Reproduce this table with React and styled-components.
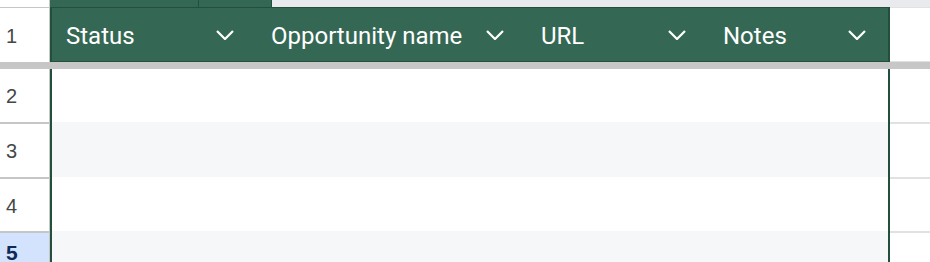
import React from 'react';
import styled, { createGlobalStyle } from 'styled-components';

const Global = createGlobalStyle`
  html, body { margin: 0; padding: 0; background: #ffffff; }
  body { font-family: Roboto, "Liberation Sans", Arial, sans-serif; }
`;

const GREEN = '#356854';
const DARK = '#23503c';
const GRID = '#c4c7c5';
const LIGHT = '#e1e1e1';

const Sheet = styled.div`
  width: 930px;
  height: 262px;
  overflow: hidden;
  display: flex;
  flex-direction: column;
  background: #fff;
`;

const Row = styled.div`
  display: flex;
  flex-shrink: 0;
  height: ${p => p.$h}px;
`;

const Corner = styled.div`
  width: 50px;
  flex-shrink: 0;
  box-sizing: border-box;
  background: #fff;
  border-right: 1px solid ${GRID};
`;

const LetterCell = styled.div`
  width: ${p => p.$w}px;
  flex-shrink: 0;
  box-sizing: border-box;
  background: ${GREEN};
  border-right: 1px solid ${DARK};
`;

const LetterRest = styled.div`
  flex: 1;
  background: #e8eaed;
`;

const RowHead = styled.div`
  width: 50px;
  flex-shrink: 0;
  box-sizing: border-box;
  display: flex;
  align-items: center;
  padding: 2px 0 0 6px;
  border-right: 1px solid ${GRID};
  border-top: ${p => (p.$top ? `${p.$top}px solid ${GRID}` : 'none')};
  background: ${p => (p.$selected ? '#d3e3fd' : '#fff')};
  color: ${p => (p.$selected ? '#0e2a57' : '#444746')};
  font-family: "Liberation Sans", Arial, sans-serif;
  font-size: ${p => (p.$selected ? 21 : 20)}px;
  font-weight: ${p => (p.$selected ? 700 : 400)};
`;

const TableHeader = styled.div`
  width: 840px;
  flex-shrink: 0;
  box-sizing: border-box;
  display: grid;
  grid-template-columns: 204px 270px 182px 180px;
  background: ${GREEN};
  border-top: 1px solid ${DARK};
  border-bottom: 1px solid ${DARK};
  border-left: 2px solid ${DARK};
  border-right: 2px solid ${DARK};
`;

const HeaderCell = styled.div`
  display: flex;
  align-items: center;
  justify-content: space-between;
  padding: 2px 22px 0 ${p => p.$pl}px;
  color: #ffffff;
  font-family: Roboto, "Liberation Sans", sans-serif;
  font-size: 24px;
  font-weight: 400;
  white-space: nowrap;
`;

const Chevron = styled.svg`
  width: 18px;
  height: 10px;
  flex-shrink: 0;
  margin-top: -2px;
`;

const RightCell = styled.div`
  flex: 1;
  box-sizing: border-box;
  background: #fff;
  border-top: ${p => (p.$top ? `${p.$top}px solid ${LIGHT}` : 'none')};
  border-bottom: ${p => (p.$bottom ? `${p.$bottom}px solid ${LIGHT}` : 'none')};
`;

const FrozenBand = styled.div`
  height: 7px;
  flex-shrink: 0;
  background: #c7c7c7;
`;

const BodyCell = styled.div`
  width: 840px;
  flex-shrink: 0;
  box-sizing: border-box;
  border-left: 2px solid ${DARK};
  border-right: 2px solid ${DARK};
  background: ${p => (p.$banded ? '#f6f7f9' : '#ffffff')};
`;

const columns = [
  { name: 'Status', pl: 14 },
  { name: 'Opportunity name', pl: 15 },
  { name: 'URL', pl: 15 },
  { name: 'Notes', pl: 15 },
];

const rows = [
  { n: 2, h: 53, top: 0, banded: false },
  { n: 3, h: 55, top: 2, banded: true },
  { n: 4, h: 54, top: 2, banded: false },
  { n: 5, h: 40, top: 2, banded: true, selected: true },
];

const ChevronDown = () => (
  <Chevron viewBox="0 0 18 10">
    <polyline points="1,1 9,9 17,1" fill="none" stroke="#fff" strokeWidth="2.2" />
  </Chevron>
);

export default function App() {
  return (
    <>
      <Global />
      <Sheet>
        <Row $h={7}>
          <Corner />
          <LetterCell $w={149} />
          <LetterCell $w={73} />
          <LetterRest />
        </Row>
        <Row $h={55}>
          <RowHead $top={1}>1</RowHead>
          <TableHeader>
            {columns.map(c => (
              <HeaderCell key={c.name} $pl={c.pl}>
                <span>{c.name}</span>
                <ChevronDown />
              </HeaderCell>
            ))}
          </TableHeader>
          <RightCell $top={1} $bottom={1} />
        </Row>
        <FrozenBand />
        {rows.map(r => (
          <Row key={r.n} $h={r.h}>
            <RowHead $top={r.top} $selected={r.selected}>{r.n}</RowHead>
            <BodyCell $banded={r.banded} />
            <RightCell $top={r.top} />
          </Row>
        ))}
      </Sheet>
    </>
  );
}
